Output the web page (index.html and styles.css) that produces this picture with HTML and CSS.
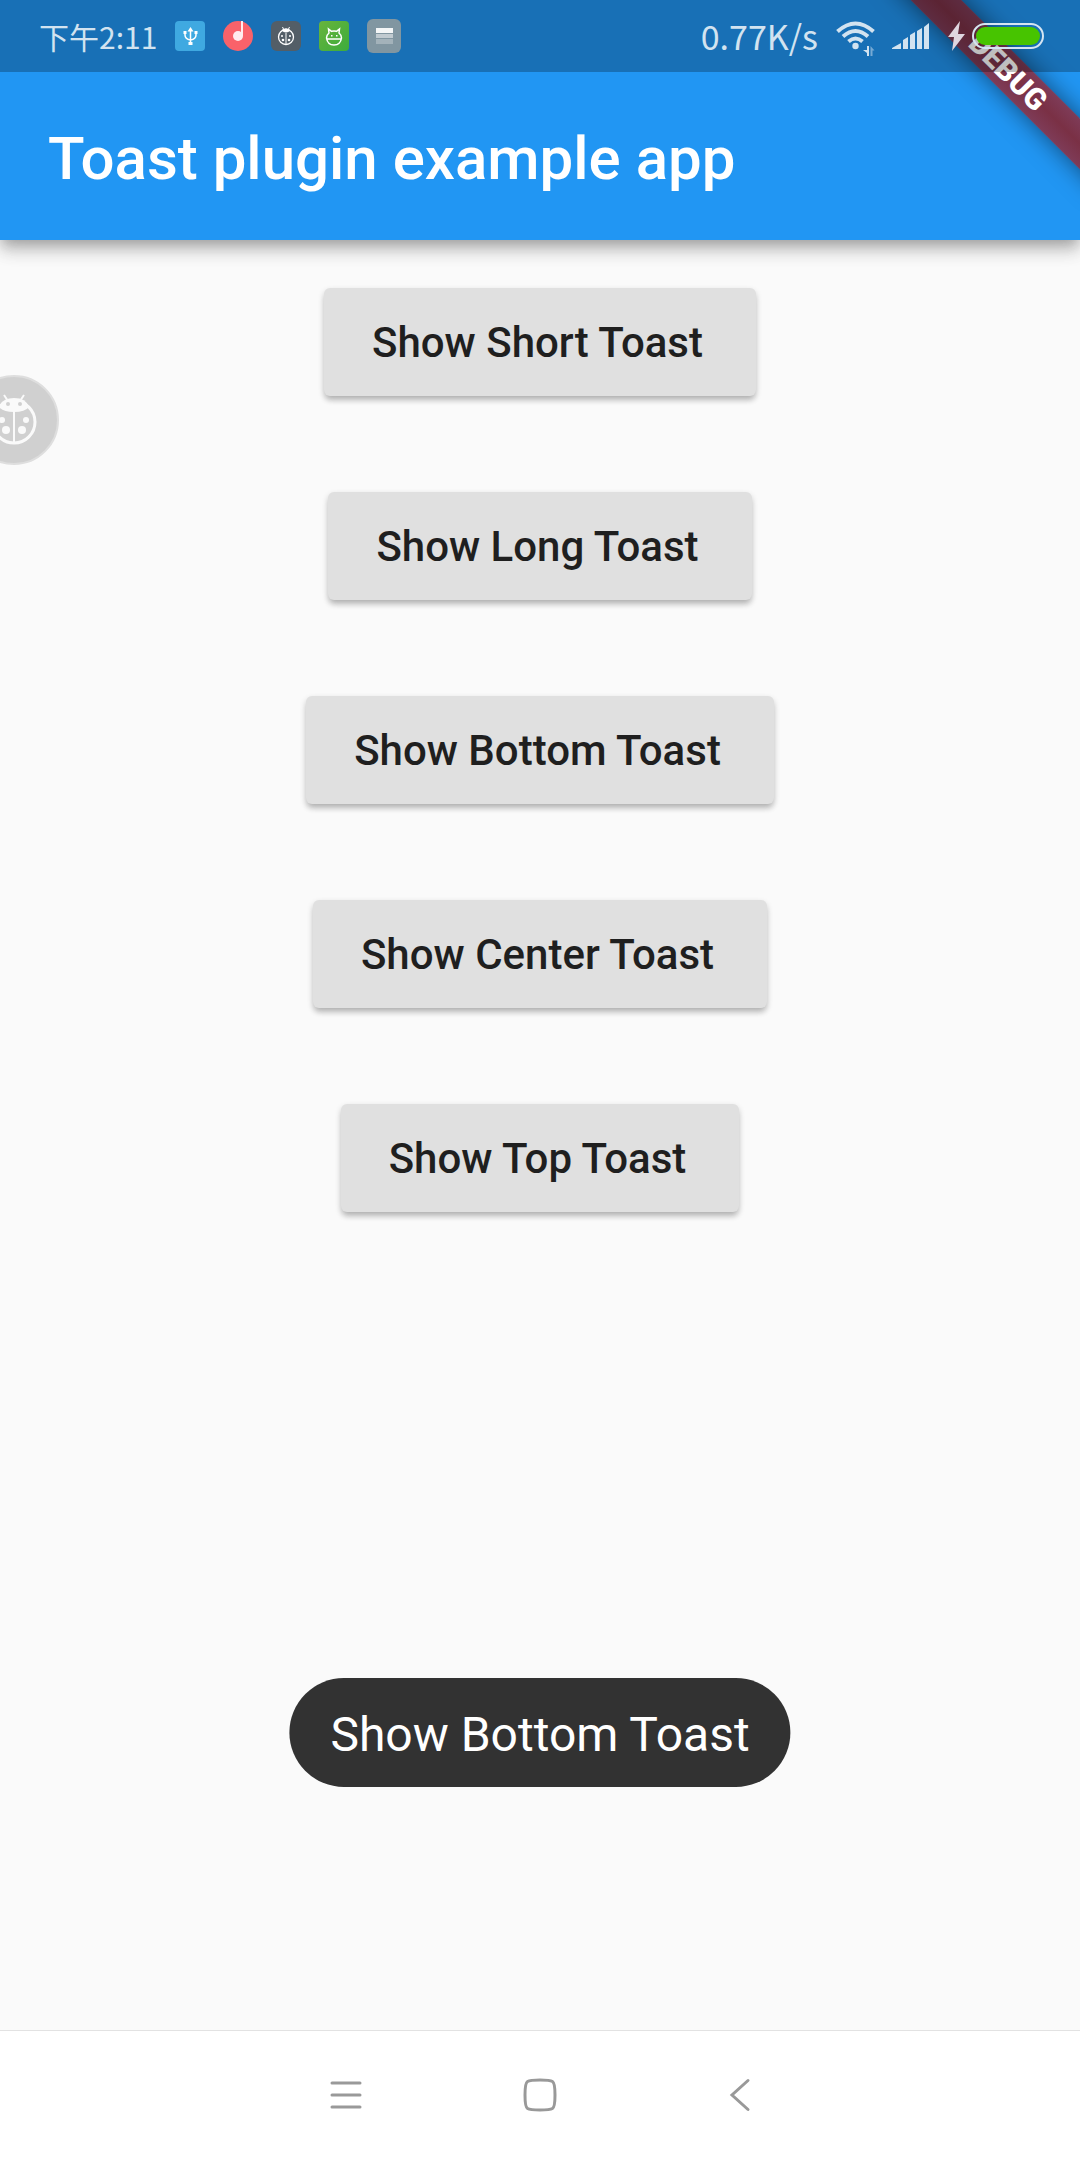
FILE: index.html
```html
<!DOCTYPE html>
<html lang="en">
<head>
<meta charset="utf-8">
<meta name="viewport" content="width=device-width, initial-scale=1">
<title>Toast plugin example app</title>
<link rel="stylesheet" href="styles.css">
</head>
<body>
<div class="screen">
  <header class="header">
    <div class="status">
      <span class="status-text time" lang="zh">下午2:11</span>
      <div class="notifications">
        <svg width="30" height="30" viewBox="0 0 30 30"><rect width="30" height="30" rx="4" fill="#3fa9e1"/><g fill="none" stroke="#fff" stroke-width="1.500"><path d="M15.500 9v14M10 12v2q0 4 5.500 5q5.500-1 5.500-5v-2"/></g><path d="M15.500 6l3 4.500h-6zM8.500 10h3v3h-3zM19.500 10h3v3h-3zM13.500 21h4v3h-4z" fill="#fff"/></svg>
        <svg width="30" height="30" viewBox="0 0 30 30"><circle cx="15" cy="15" r="15" fill="#f9626a"/><circle cx="15" cy="15" r="5" fill="#ffecee"/><path d="M18 0h2v15h-2z" fill="#ffecee"/></svg>
        <svg width="30" height="30" viewBox="0 0 30 30"><rect width="30" height="30" rx="6" fill="#535e67"/><g fill="none" stroke="#fff"><circle cx="15" cy="16" r="7.500" stroke-width="1.300"/><path d="M15 12v12M11.500 6l1.500 3M18.500 6l-1.500 3" stroke-width="1"/></g><path d="M11 9q4-3.500 8 0q-1 2.500-4 2.500t-4-2.500z" fill="#fff"/><g fill="#fff"><circle cx="11" cy="15" r="1"/><circle cx="19" cy="15" r="1"/><circle cx="12" cy="19" r="1.300"/><circle cx="18" cy="19" r="1.300"/></g></svg>
        <svg width="30" height="30" viewBox="0 0 30 30"><defs><linearGradient id="leaf" x2="1" y2="1"><stop stop-color="#68b43c"/><stop offset="1" stop-color="#3cac3c"/></linearGradient></defs><rect width="30" height="30" rx="4" fill="url(#leaf)"/><path d="M10 12L9.500 8l3 2.300q2.500-.8 5 0l3-2.300-.5 4q2.500 2 2.500 5q-1 7-7.500 7t-7.500-7q0-3 2.500-5zM8 18h14" fill="none" stroke="#fff" stroke-width="1.500"/><path d="M12 14h1.500v1.500H12zM17 14h1.500v1.500H17z" fill="#fff"/></svg>
        <svg width="34" height="34" viewBox="0 0 34 34"><rect width="34" height="34" rx="6" fill="#8196a1"/><path d="M9 9h17v5H9z" fill="#f4f6f7"/><path d="M9 15h17v4H9z" fill="#c0cad0"/><path d="M9 20h17v5H9z" fill="#a3b2ba"/></svg>
      </div>
      <div class="indicators">
        <span class="status-text">0.77K/s</span>
        <svg class="wifi" width="40" height="36" viewBox="0 0 40 36"><g fill="none" stroke="#d2e3f0" stroke-width="4"><path d="M1.500 11.500q18-16 36 0M7 16.500q12.500-11 25 0M12.500 21.500q7-6 14 0"/></g><circle cx="19.500" cy="26" r="3.200" fill="#d2e3f0"/><path d="M33 26v10h-2v-3l-4-3h4v-4z" fill="#d2e3f0"/><path d="M34.500 26l4 4.500h-2V36h-2z" fill="#76a9d4"/></svg>
        <svg class="signal" width="38" height="26" viewBox="0 0 38 26" fill="#d2e3f0"><path d="M0 26v-1l9-5v6zM11 26v-9l5-3v12zM18 26V12l5-3v17zM25 26V8l5-3v21zM32 26V4l5-4v26z"/></svg>
        <svg class="bolt" width="17" height="30" viewBox="0 0 17 30"><path d="M12 0L0 16h6L4 30l13-17h-7z" fill="#dfd6df"/></svg>
        <svg class="battery" width="72" height="26" viewBox="0 0 72 26"><rect x="1" y="1" width="70" height="24" rx="12" fill="none" stroke="#d5e5f2" stroke-width="2"/><rect x="4" y="4" width="64" height="18" rx="9" fill="#47c400"/></svg>
      </div>
    </div>
    <div class="debug">DEBUG</div>
    <h1 class="title">Toast plugin example app</h1>
  </header>
  <main class="content">
    <button class="raised" type="button">Show Short Toast</button>
    <button class="raised" type="button">Show Long Toast</button>
    <button class="raised" type="button">Show Bottom Toast</button>
    <button class="raised" type="button">Show Center Toast</button>
    <button class="raised" type="button">Show Top Toast</button>
  </main>
  <button class="bug" type="button" aria-label="Debug tools">
    <svg width="90" height="90" viewBox="0 0 90 90"><circle cx="45" cy="45" r="44" fill="#d0d0d0" stroke="#dedede" stroke-width="2"/><circle cx="45" cy="47" r="21" fill="none" stroke="#fafafa" stroke-width="3"/><path d="M30 32q3-9 15-9t15 9q-4 5-15 5t-15-5z" fill="#fafafa"/><path d="M45 36v32M35 20l4 6M55 20l-4 6" stroke="#fafafa" stroke-width="2"/><g fill="#fafafa"><circle cx="33" cy="45" r="3"/><circle cx="57" cy="45" r="3"/><circle cx="37" cy="55" r="4"/><circle cx="53" cy="55" r="4"/></g><g fill="#d0d0d0"><circle cx="39" cy="29" r="2"/><circle cx="51" cy="29" r="2"/></g></svg>
  </button>
  <div class="toast" role="status">Show Bottom Toast</div>
  <nav class="nav">
    <button class="nav-button" type="button" aria-label="Recent apps"><svg width="36" height="36" viewBox="0 0 36 36"><path d="M6 6h28M6 18h28M6 30h28"/></svg></button>
    <button class="nav-button" type="button" aria-label="Home"><svg width="36" height="36" viewBox="0 0 36 36"><path d="M18 3Q28 3 30.500 4.500Q33 6 33 18T30.500 31.500Q28 33 18 33T5.500 31.500Q3 30 3 18T5.500 4.500Q8 3 18 3z"/></svg></button>
    <button class="nav-button" type="button" aria-label="Back"><svg width="36" height="36" viewBox="0 0 36 36"><path d="M30 3.500L14 18l16 14.500"/></svg></button>
  </nav>
</div>
</body>
</html>
```
FILE: styles.css
```css
* {
  box-sizing: border-box;
}

body {
  margin: 0;
  background: #fafafa;
  font-family: Roboto, "Noto Sans", sans-serif;
}

button {
  border: 0;
  padding: 0;
  background: none;
  font: inherit;
}

svg {
  display: block;
  flex: none;
}

.screen {
  position: relative;
  display: flex;
  flex-direction: column;
  min-height: 100vh;
  overflow: hidden;
}

.header {
  position: relative;
  background: #2196f3;
  box-shadow: 0 6px 12px -3px rgba(0, 0, 0, 0.2), 0 12px 15px rgba(0, 0, 0, 0.14), 0 3px 24px rgba(0, 0, 0, 0.12);
}

/* Translucent bar, drawn above the debug ribbon. */
.status {
  position: relative;
  z-index: 2;
  display: flex;
  align-items: center;
  height: 72px;
  padding: 0 36px 0 39px;
  background: rgba(0, 0, 0, 0.25);
}

.status-text {
  font-family: "Noto Sans CJK SC", sans-serif;
  font-size: 34px;
  line-height: 48px;
  color: #d2e3f0;
  white-space: nowrap;
}

.time {
  font-size: 30px;
}

.notifications {
  display: flex;
  align-items: center;
  gap: 18px;
  margin-left: 18px;
}

.indicators {
  display: flex;
  align-items: center;
  margin-left: auto;
}

.wifi {
  margin: 4px 16px 0 18px;
}

.bolt {
  margin: 0 7px 0 18px;
}

.debug {
  position: absolute;
  z-index: 1;
  top: 54px;
  right: -78px;
  width: 300px;
  transform: rotate(45deg);
  background: linear-gradient(#7e3c58, #7a3045, #7e3c58);
  box-shadow: 0 0 24px rgba(0, 0, 0, 0.5);
  color: #fff;
  font-size: 30px;
  font-weight: 900;
  line-height: 36px;
  text-align: center;
}

.title {
  margin: 0;
  padding: 51px 48px 45px;
  color: #fff;
  font-size: 60px;
  font-weight: 500;
  line-height: 72px;
}

.content {
  flex: 1;
  display: flex;
  flex-direction: column;
  align-items: center;
  gap: 96px;
  padding: 48px;
}

.raised {
  height: 108px;
  padding: 0 53px 0 48px;
  border-radius: 6px;
  background: #e0e0e0;
  box-shadow: 0 3px 6px rgba(0, 0, 0, 0.2), 0 6px 6px -2px rgba(0, 0, 0, 0.14);
  color: #1f1f1f;
  font-size: 42px;
  font-weight: 500;
}

.bug {
  position: absolute;
  top: 375px;
  left: -31px;
}

.toast {
  position: absolute;
  bottom: 373px;
  left: 50%;
  transform: translateX(-50%);
  padding: 28px 41px 24px;
  border-radius: 55px;
  background: #323232;
  color: #fff;
  font-size: 48px;
  line-height: 57px;
  white-space: nowrap;
}

.nav {
  display: flex;
  justify-content: center;
  gap: 160px;
  padding: 46px 0 47px;
  border-top: 1px solid #e2e2e2;
  background: #fff;
}

.nav-button svg {
  fill: none;
  stroke: #999;
  stroke-width: 3;
  stroke-linecap: round;
}
```
